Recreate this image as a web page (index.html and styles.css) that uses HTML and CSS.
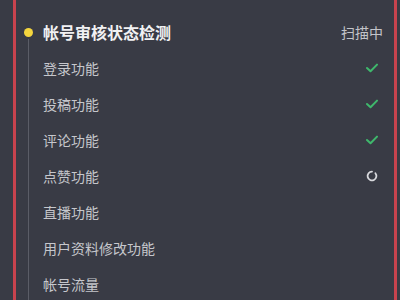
FILE: index.html
```html
<!DOCTYPE html>
<html lang="zh-CN">
<head>
<meta charset="utf-8">
<link rel="stylesheet" href="styles.css">
</head>
<body>
<div class="frame">
  <div class="rail">
    <span class="dot"></span>
    <span class="line"></span>
  </div>
  <div class="content">
    <div class="row head">
      <span class="title">帐号审核状态检测</span>
      <span class="state">扫描中</span>
    </div>
    <div class="row item">
      <span>登录功能</span>
      <svg class="icon" width="12" height="10" viewBox="0 0 12 10"><path d="M1 5 L4.5 8.3 L11 1.6" fill="none" stroke="#3fb86c" stroke-width="2" stroke-linecap="round" stroke-linejoin="round"/></svg>
    </div>
    <div class="row item">
      <span>投稿功能</span>
      <svg class="icon" width="12" height="10" viewBox="0 0 12 10"><path d="M1 5 L4.5 8.3 L11 1.6" fill="none" stroke="#3fb86c" stroke-width="2" stroke-linecap="round" stroke-linejoin="round"/></svg>
    </div>
    <div class="row item">
      <span>评论功能</span>
      <svg class="icon" width="12" height="10" viewBox="0 0 12 10"><path d="M1 5 L4.5 8.3 L11 1.6" fill="none" stroke="#3fb86c" stroke-width="2" stroke-linecap="round" stroke-linejoin="round"/></svg>
    </div>
    <div class="row item">
      <span>点赞功能</span>
      <svg class="icon" width="12" height="12" viewBox="0 0 12 12"><path d="M9.4 3.2 A4.4 4.4 0 1 1 6 1.6" fill="none" stroke="#d9dade" stroke-width="1.8" stroke-linecap="round"/></svg>
    </div>
    <div class="row item"><span>直播功能</span></div>
    <div class="row item"><span>用户资料修改功能</span></div>
    <div class="row item"><span>帐号流量</span></div>
  </div>
</div>
</body>
</html>
```

FILE: styles.css
```css
html, body {
  margin: 0;
  padding: 0;
  height: 100%;
  overflow: hidden;
  background: #393b45;
  font-family: "Noto Sans CJK SC", "Noto Sans", sans-serif;
}

.frame {
  box-sizing: border-box;
  margin-left: 13px;
  width: 384px;
  min-height: 100vh;
  border-left: 3px solid #c8434e;
  border-right: 3px solid #c8434e;
  padding-top: 14px;
  display: grid;
  grid-template-columns: 25px 1fr;
  column-gap: 2px;
}

.rail {
  display: flex;
  flex-direction: column;
  align-items: center;
}

.dot {
  width: 9px;
  height: 9px;
  border-radius: 50%;
  background: #f4d53e;
  margin-top: 13.5px;
  flex: none;
}

.line {
  width: 1px;
  flex: 1;
  background: #5b5d67;
  margin-top: 2px;
}

.content {
  display: flex;
  flex-direction: column;
  padding-right: 11px;
}

.row {
  display: flex;
  align-items: center;
  justify-content: space-between;
  height: 36px;
}

.title {
  font-size: 16px;
  font-weight: 700;
  color: #f1f1f3;
}

.state {
  font-size: 14px;
  color: #c3c4c9;
}

.item {
  font-size: 14px;
  color: #c6c7cc;
}

.icon {
  margin-right: 5px;
}
```
